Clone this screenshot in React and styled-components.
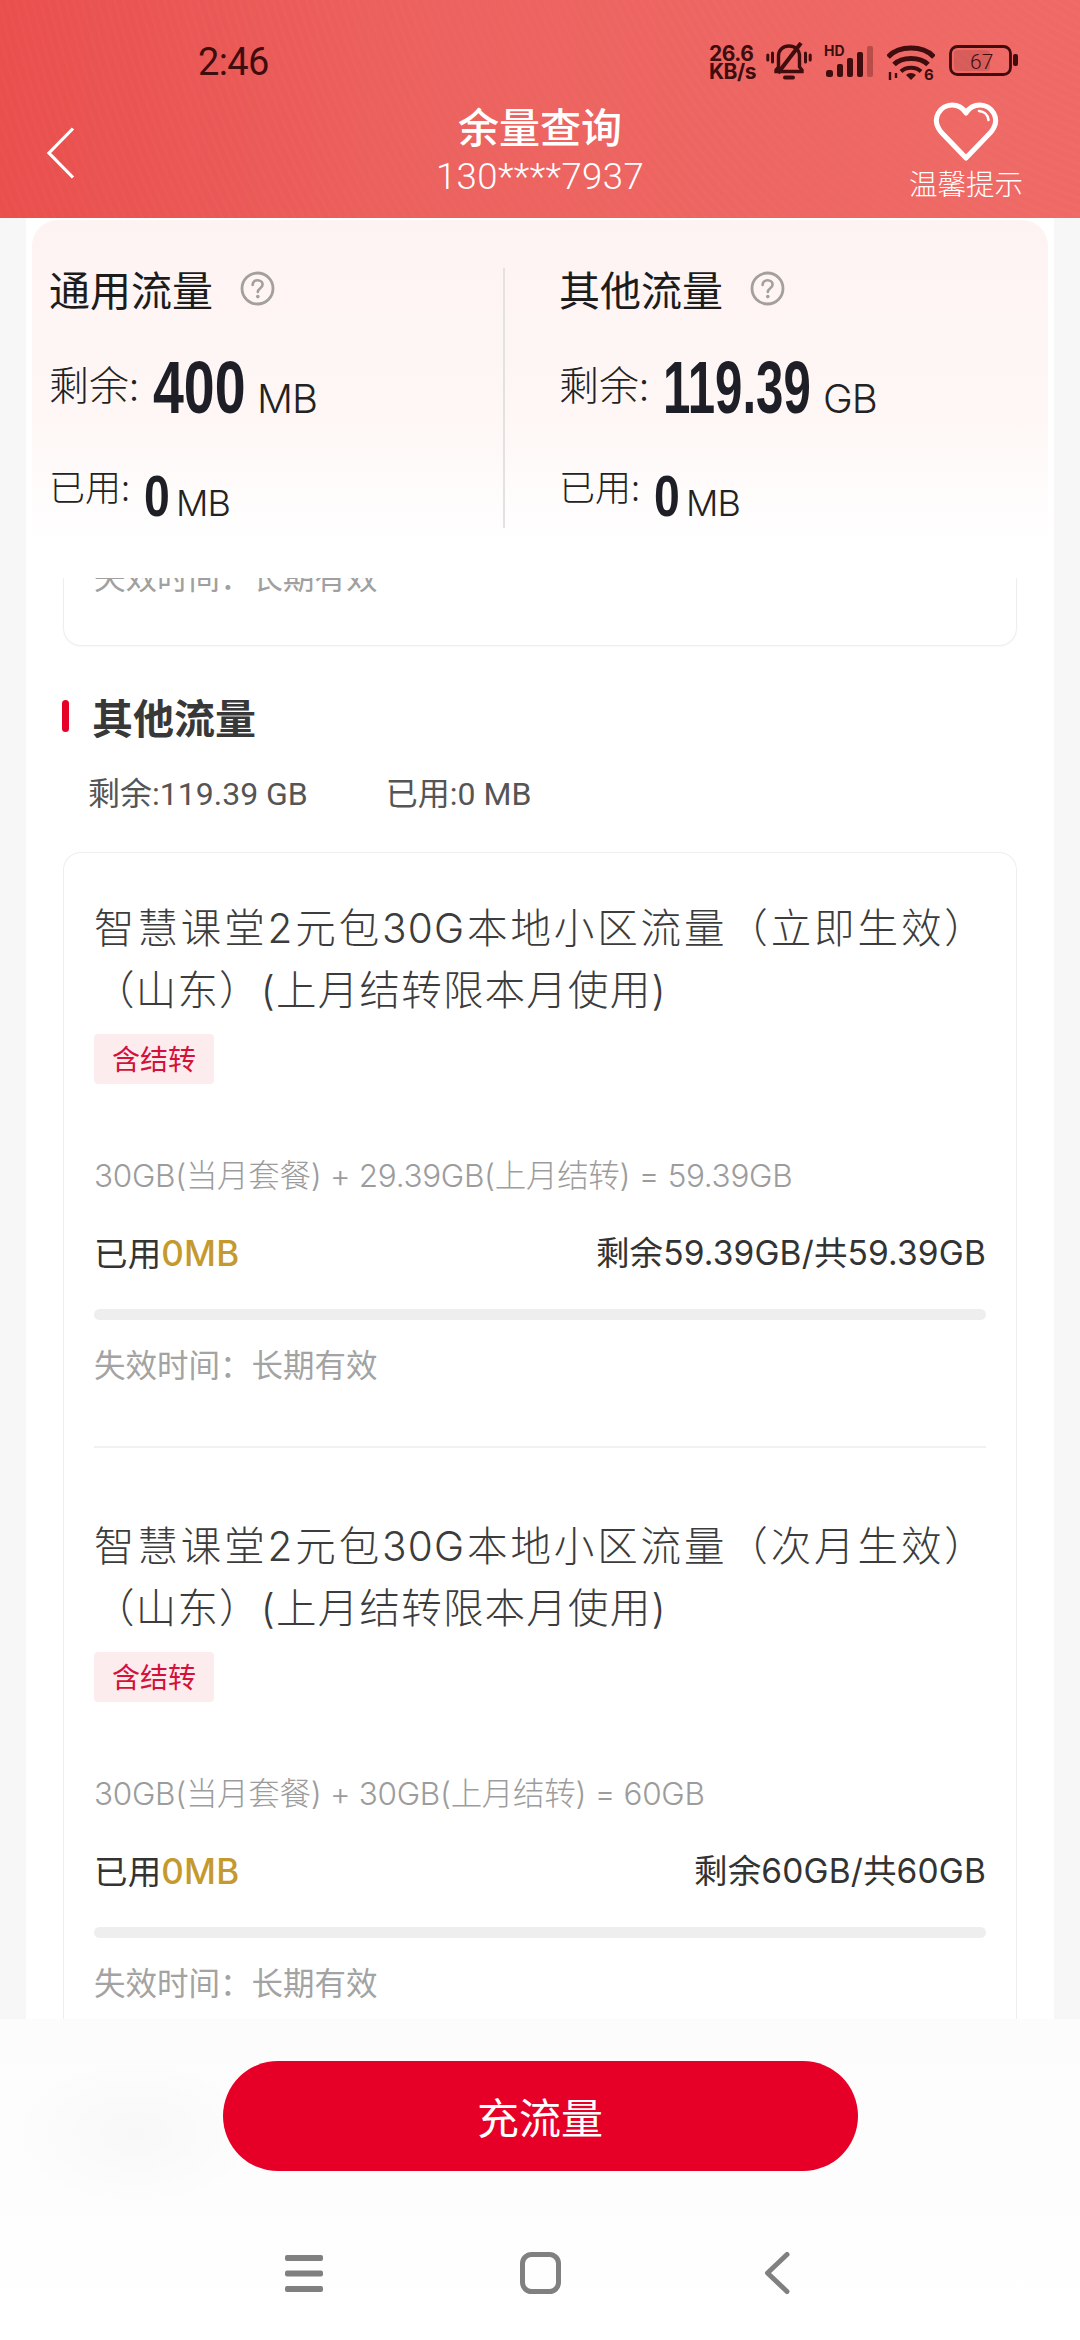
import React from "react";
import styled, { createGlobalStyle } from "styled-components";

const Global = createGlobalStyle`
  html, body { margin: 0; padding: 0; background: #fff; }
  * { box-sizing: border-box; }
  body { font-family: "Noto Sans", "Noto Sans CJK SC", sans-serif; }
`;
const FONT = `"Noto Sans", "Noto Sans CJK SC", sans-serif`;
const DARK = "#3f0d0d";

const Page = styled.div`
  width: 1080px; height: 2340px; display: flex; flex-direction: column; overflow: hidden;
  background: #fff; font-family: ${FONT};
`;
const Header = styled.header`
  height: 218px; flex: none; display: flex; flex-direction: column;
  background:
    repeating-radial-gradient(circle at 1250px -300px, rgba(255,255,255,0) 0 5px, rgba(255,255,255,.016) 5px 8px),
    linear-gradient(90deg, #e94f4d 0%, #ec625f 40%, #ef6a66 100%);
`;
const StatusBar = styled.div`
  height: 92px; flex: none; padding: 44px 62px 0 198px; display: flex; justify-content: space-between; align-items: flex-start;
  color: ${DARK};
`;
const Clock = styled.div`
  font: 400 38px/36px "Roboto", sans-serif; letter-spacing: -.6px;
`;
const StatusIcons = styled.div`display: flex; align-items: flex-start; margin-top: 1px;`;
const Speed = styled.div`
  font: 700 21px/18px "Inter", sans-serif; width: 57px; color: ${DARK}; letter-spacing: -.5px;
`;
const Nav = styled.div`
  flex: 1; display: grid; grid-template-columns: 1fr 400px 1fr; padding: 0 47px;
`;
const BackBtn = styled.div`padding-top: 35px;`;
const Titles = styled.div`
  display: flex; flex-direction: column; align-items: center; color: #fff; padding-top: 6px;
`;
const Title = styled.div`font-size: 41px; line-height: 54px; font-weight: 500; font-family: "Noto Sans CJK SC", sans-serif;`;
const Phone = styled.div`font: 300 36.5px/42px "Roboto", sans-serif; margin-top: 4px; letter-spacing: .4px;`;
const Tip = styled.div`
  justify-self: end; margin-right: 10px; display: flex; flex-direction: column; align-items: center; color: #fff; padding-top: 10px;
`;
const TipLabel = styled.div`font-size: 28.5px; line-height: 36px; margin-top: 3px; font-family: "Noto Sans CJK SC", sans-serif; font-weight: 300;`;

const Scroll = styled.main`
  flex: 1; min-height: 0; overflow: hidden; background: #f7f7f7; padding: 0 26px;
`;
const Column = styled.div`background: #fff; height: 100%; overflow: hidden;`;
const Summary = styled.section`
  height: 358px; margin: 2px 6px 0 6px; border-radius: 26px 26px 0 0;
  background: linear-gradient(180deg, #fdf3f2 0%, #fef7f6 55%, #ffffff 92%);
  display: grid; grid-template-columns: 471px 1fr; padding-top: 48px;
`;
const SumCol = styled.div`
  padding-left: ${p => p.$pad}px; height: 260px;
  border-left: ${p => (p.$line ? "2px solid #e4e2e1" : "none")};
  color: #222;
`;
const SumHead = styled.div`display: flex; align-items: center; height: 40px; gap: 27px; font-size: 41px; color: #1c1c1c; font-family: "Noto Sans CJK SC", sans-serif; font-weight: 400;`;
const SumLine = styled.div`
  display: flex; align-items: baseline; font-family: "Noto Sans CJK SC", sans-serif; margin-top: ${p => p.$mt}px; height: ${p => p.$h}px;
`;
const SumLabel = styled.span`font-size: ${p => p.$size}px; color: #222; position: relative; top: ${p => p.$up}px; font-weight: 300;`;
const SumNum = styled.span`
  display: inline-block; white-space: nowrap; width: ${p => p.$w}px; transform: scaleX(${p => p.$sx}); transform-origin: left center;
  font-family: "Liberation Sans", sans-serif; font-weight: 700; font-size: ${p => p.$size}px; color: #1e1e26;
  margin: 0 ${p => p.$gap}px 0 ${p => p.$left}px;
`;
const SumUnit = styled.span`font: 300 ${p => p.$size}px/1 "Inter", sans-serif; color: #222; letter-spacing: -1px;`;

const CutCard = styled.div`
  height: 68px; margin: 0 37px; border: 1px solid #eee; border-top: none; border-radius: 0 0 18px 18px; overflow: hidden;
  box-shadow: 0 1px 2px rgba(0,0,0,.03); padding: 0 30px;
`;
const CutText = styled.div`margin-top: -19px; font-size: 31.5px; line-height: 32px; color: #a0a0a0; font-family: "Noto Sans CJK SC", sans-serif; font-weight: 400;`;

const SectionHead = styled.div`
  display: flex; align-items: center; gap: 23px; margin: 48px 0 0 36px; height: 44px;
`;
const Mark = styled.i`display: block; width: 7px; height: 32px; border-radius: 4px; background: #e60027;`;
const SectionTitle = styled.h2`margin: 0; font: 600 41px/44px "Noto Sans CJK SC", sans-serif; color: #383838;`;
const Totals = styled.div`
  display: flex; gap: 78px; margin: 39px 0 0 62px; height: 34px; font-size: 32px; line-height: 34px; color: #555; font-family: "Roboto", "Noto Sans CJK SC", sans-serif;
`;
const Card = styled.section`
  margin: 41px 37px 0; border: 1px solid #eee; border-bottom: none; border-radius: 18px 18px 0 0; padding: 0 30px 80px;
`;
const Item = styled.article`
  padding-top: ${p => (p.$first ? 45 : 68)}px; height: ${p => (p.$first ? 595 : "auto")}px;
  border-bottom: ${p => (p.$first ? "2px solid #f1f1f1" : "none")};
`;
const ItemTitle = styled.h3`
  margin: 0; font: 300 40.5px/62px "Inter", "Noto Sans CJK SC", sans-serif; color: #3c3c3c; letter-spacing: 1.2px; text-align: justify;
`;
const Tag = styled.span`
  display: block; width: 120px; height: 50px; margin-top: 12px; border-radius: 4px; background: #fdecee; color: #d5103a;
  font: 400 28px/48px "Noto Sans CJK SC", sans-serif; text-align: center;
`;
const Formula = styled.div`margin-top: 72px; font: 300 31.5px/40px "Inter", "Noto Sans CJK SC", sans-serif; color: #9c9c9c; letter-spacing: -.3px;`;
const Usage = styled.div`
  display: flex; justify-content: space-between; margin-top: 37px; font: 400 33.5px/40px "Inter", "Noto Sans CJK SC", sans-serif; color: #333; letter-spacing: .15px;
`;
const Gold = styled.span`color: #c49a2e; font-size: 35px; font-weight: 500;`;
const Bar = styled.div`height: 11px; margin-top: 35px; border-radius: 6px; background: #eee;`;
const Expire = styled.div`margin-top: 23px; font: 400 31.5px/40px "Noto Sans CJK SC", sans-serif; color: #a3a3a3;`;

const Bottom = styled.footer`
  height: 321px; flex: none; position: relative; background: linear-gradient(180deg, #fcfcfc 0%, #fdfdfd 55%, #fff 100%);
  display: flex; flex-direction: column; align-items: center;
`;
const Glow = styled.div`
  position: absolute; left: 10px; top: 40px; width: 250px; height: 150px; border-radius: 50%;
  background: radial-gradient(closest-side, rgba(0,0,0,.02), rgba(0,0,0,0));
`;
const Charge = styled.button`
  position: relative; margin-top: 42px; width: 635px; height: 110px; border: none; border-radius: 55px; background: #e60027; color: #fff;
  font: 400 42px/1 "Noto Sans CJK SC", sans-serif;
`;
const SysNav = styled.nav`
  display: flex; align-items: flex-start; margin-top: 84px; padding-right: 6px;
`;
const NavSlot = styled.div`width: ${p => p.$w}px; display: flex;`;
const Help = styled.svg`width: 35px; height: 35px; flex: none;`;

const HelpIcon = () => (
  <Help viewBox="0 0 35 35" fill="none">
    <circle cx="17.5" cy="17.5" r="15.5" stroke="#a39f9d" strokeWidth="2.8" />
    <path d="M12.6 14c0-3 2.2-4.8 5-4.8s5 1.8 5 4.4c0 3.6-4.8 3.6-4.8 7.4" stroke="#a39f9d" strokeWidth="2.6" strokeLinecap="round" />
    <circle cx="17.8" cy="25.6" r="1.8" fill="#a39f9d" />
  </Help>
);

const BellIcon = () => (
  <svg width="46" height="39" viewBox="0 0 46 39" fill="none" stroke={DARK} strokeWidth="3.4" style={{ marginTop: -3 }}>
    <path d="M10 28l2.500-3V14c0-6 4.500-10 10.500-10s10.500 4 10.500 10v11l2.500 3v1.500H10z" />
    <path d="M19 35.500h8" strokeWidth="4" strokeLinecap="round" />
    <path d="M12 31L35 1" strokeWidth="4" />
    <path d="M6.500 11v9M1.800 13v5M39.500 11v9M44.200 13v5" strokeWidth="3" strokeLinecap="round" />
  </svg>
);
const SignalIcon = () => (
  <svg width="50" height="36" viewBox="0 0 50 36" style={{ marginLeft: 12 }}>
    <text x="0" y="11" fontFamily="Inter, sans-serif" fontWeight="700" fontSize="14" fill={DARK}>HD</text>
    <rect x="2" y="25" width="7" height="7" rx="2.500" fill={DARK} />
    <rect x="13" y="19" width="6" height="13" rx="2" fill={DARK} />
    <rect x="23" y="13" width="6" height="19" rx="2" fill={DARK} />
    <rect x="33" y="7" width="6" height="25" rx="2" fill={DARK} />
    <rect x="43" y="1" width="6" height="31" rx="2" fill={DARK} opacity=".3" />
  </svg>
);
const WifiIcon = () => (
  <svg width="48" height="36" viewBox="0 0 48 36" fill="none" stroke={DARK} strokeWidth="5" style={{ marginLeft: 13 }}>
    <path d="M1 12C12 0 36 0 47 12" />
    <path d="M7 19.500c8-8 26-8 34 0" />
    <path d="M14 26.500c5-5 15-5 20 0" strokeWidth="4" />
    <path d="M24 35l-5-5a7 7 0 0 1 10 0z" fill={DARK} stroke="none" />
    <path d="M3 27v8M9 28v5" strokeWidth="2.400" />
    <text x="37" y="35" fontFamily="Inter, sans-serif" fontWeight="700" fontSize="15" fill={DARK} stroke="none">6</text>
  </svg>
);
const BatteryIcon = () => (
  <svg width="69" height="32" viewBox="0 0 69 32" style={{ marginLeft: 14 }}>
    <rect x="1.500" y="1.500" width="60" height="28" rx="7" fill="none" stroke={DARK} strokeWidth="2.800" />
    <rect x="5" y="5" width="36" height="21" rx="4" fill={DARK} opacity=".13" />
    <rect x="64" y="9" width="5" height="12" rx="2" fill={DARK} />
    <text x="21" y="24" fontFamily="Roboto, sans-serif" fontWeight="300" fontSize="21" fill={DARK}>67</text>
  </svg>
);
const HeartIcon = () => (
  <svg width="66" height="60" viewBox="0 0 66 60" fill="none" stroke="#fff" strokeWidth="5" strokeLinejoin="round">
    <path d="M33 56L8 30C-3 16 8 3 19 3c6 0 11 3 14 8 3-5 8-8 14-8 11 0 22 13 11 27z" />
    <path d="M46 9c5 .5 9 4 9.500 9" strokeWidth="2.600" strokeLinecap="round" />
  </svg>
);

const ITEMS = [
  { title: "立即生效", formula: "30GB(当月套餐) + 29.39GB(上月结转) = 59.39GB", left: "剩余59.39GB/共59.39GB" },
  { title: "次月生效", formula: "30GB(当月套餐) + 30GB(上月结转) = 60GB", left: "剩余60GB/共60GB" },
];

const SUMS = [
  { name: "通用流量", pad: 17, line: false, rest: "400", w: 93, sx: 0.75, unit: "MB" },
  { name: "其他流量", pad: 54, line: true, rest: "119.39", w: 149, sx: 0.665, unit: "GB" },
];

export default function App() {
  return (
    <Page>
      <Global />
      <Header>
        <StatusBar>
          <Clock>2:46</Clock>
          <StatusIcons>
            <Speed>26.6<br />KB/s</Speed>
            <BellIcon />
            <SignalIcon />
            <WifiIcon />
            <BatteryIcon />
          </StatusIcons>
        </StatusBar>
        <Nav>
          <BackBtn>
            <svg width="28" height="52" viewBox="0 0 28 52" fill="none" stroke="#fff" strokeWidth="3.200">
              <path d="M26 1.500L2 26l24 24.500" />
            </svg>
          </BackBtn>
          <Titles>
            <Title>余量查询</Title>
            <Phone>130****7937</Phone>
          </Titles>
          <Tip>
            <HeartIcon />
            <TipLabel>温馨提示</TipLabel>
          </Tip>
        </Nav>
      </Header>
      <Scroll>
        <Column>
          <Summary>
            {SUMS.map(s => (
              <SumCol key={s.name} $pad={s.pad} $line={s.line}>
                <SumHead>{s.name}<HelpIcon /></SumHead>
                <SumLine $mt={37} $h={78}>
                  <SumLabel $size={40} $up={-13}>剩余:</SumLabel>
                  <SumNum $size={74} $w={s.w} $sx={s.sx} $gap={11} $left={14}>{s.rest}</SumNum>
                  <SumUnit $size={40}>{s.unit}</SumUnit>
                </SumLine>
                <SumLine $mt={39} $h={50}>
                  <SumLabel $size={36} $up={-15}>已用:</SumLabel>
                  <SumNum $size={58} $w={24} $sx={0.8} $gap={8} $left={14}>0</SumNum>
                  <SumUnit $size={36}>MB</SumUnit>
                </SumLine>
              </SumCol>
            ))}
          </Summary>
          <CutCard><CutText>失效时间：长期有效</CutText></CutCard>
          <SectionHead><Mark /><SectionTitle>其他流量</SectionTitle></SectionHead>
          <Totals><span>剩余:119.39 GB</span><span>已用:0 MB</span></Totals>
          <Card>
            {ITEMS.map((it, i) => (
              <Item key={it.title} $first={i === 0}>
                <ItemTitle>智慧课堂2元包30G本地小区流量（{it.title}）（山东）(上月结转限本月使用)</ItemTitle>
                <Tag>含结转</Tag>
                <Formula>{it.formula}</Formula>
                <Usage>
                  <span>已用<Gold>0MB</Gold></span>
                  <span>{it.left}</span>
                </Usage>
                <Bar />
                <Expire>失效时间：长期有效</Expire>
              </Item>
            ))}
          </Card>
        </Column>
      </Scroll>
      <Bottom>
        <Glow />
        <Charge>充流量</Charge>
        <SysNav>
          <NavSlot $w={235}>
            <svg width="38" height="37" viewBox="0 0 38 37" fill="#808080">
              <rect x="0" y="0" width="38" height="6" rx="2" />
              <rect x="0" y="15.500" width="38" height="6" rx="2" />
              <rect x="0" y="31" width="38" height="6" rx="2" />
            </svg>
          </NavSlot>
          <NavSlot $w={244}>
            <svg width="41" height="42" viewBox="0 0 41 42" fill="none" stroke="#808080" strokeWidth="5" style={{ marginTop: -3 }}>
              <rect x="2.500" y="2.500" width="36" height="37" rx="9" />
            </svg>
          </NavSlot>
          <NavSlot $w={26}>
            <svg width="26" height="42" viewBox="0 0 26 42" fill="none" stroke="#808080" strokeWidth="5" strokeLinecap="round" strokeLinejoin="round" style={{ marginTop: -3 }}>
              <path d="M23 2.500L3.500 21 23 39.500" />
            </svg>
          </NavSlot>
        </SysNav>
      </Bottom>
    </Page>
  );
}
